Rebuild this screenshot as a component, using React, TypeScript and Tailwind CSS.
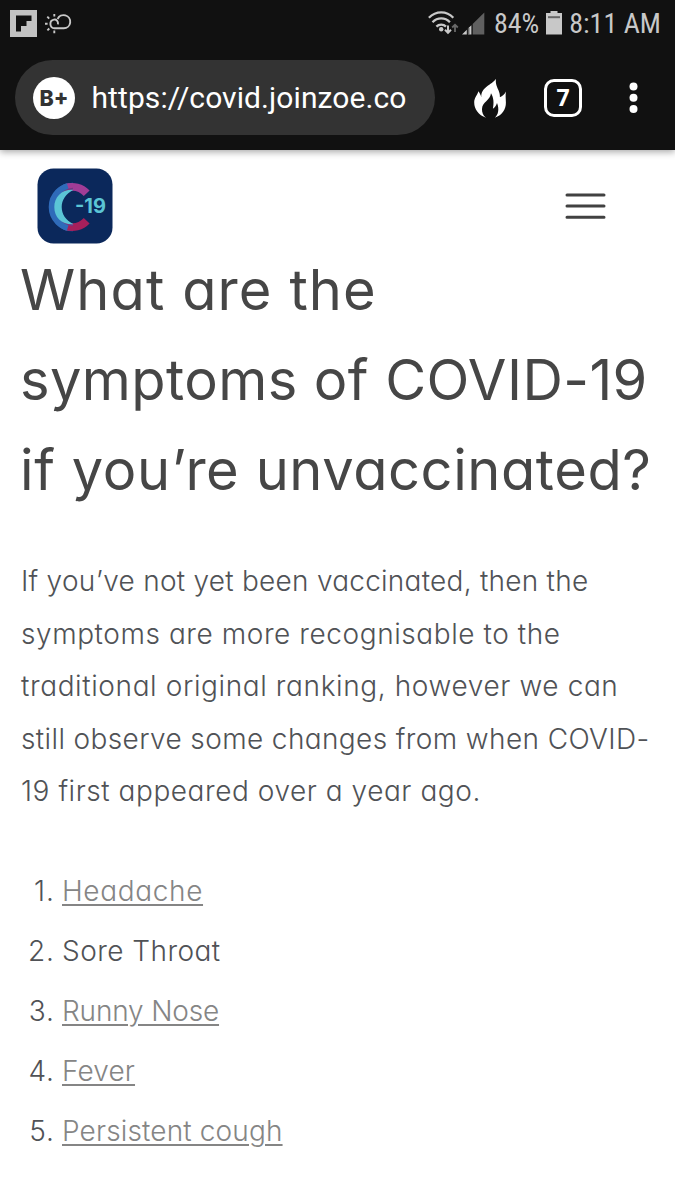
const sofia = "font-['Inter','Liberation_Sans',sans-serif] [font-feature-settings:'cv11']";

const heading = [
  { text: "What are the", spacing: "tracking-[1.1px]" },
  { text: "symptoms of COVID-19", spacing: "tracking-[0.42px]" },
  { text: "if you’re unvaccinated?", spacing: "tracking-[0.58px]" },
];

const paragraph = [
  { text: "If you’ve not yet been vaccinated, then the", spacing: "tracking-[0.25px]" },
  { text: "symptoms are more recognisable to the", spacing: "tracking-[0.57px]" },
  { text: "traditional original ranking, however we can", spacing: "tracking-[0.61px]" },
  { text: "still observe some changes from when COVID-", spacing: "tracking-[0.38px]" },
  { text: "19 first appeared over a year ago.", spacing: "tracking-[0.55px]" },
];

const symptoms = [
  { text: "Headache", link: true, spacing: "tracking-[0.64px]" },
  { text: "Sore Throat", link: false, spacing: "tracking-[0.45px]" },
  { text: "Runny Nose", link: true, spacing: "tracking-[-0.17px]" },
  { text: "Fever", link: true, spacing: "tracking-[0.13px]" },
  { text: "Persistent cough", link: true, spacing: "tracking-[0.14px]" },
];

function StatusBar() {
  return (
    <div className="flex h-[46px] items-center justify-between pl-[10px] pr-[14px] text-[#c8c8c8]">
      <div className="flex items-center gap-[8px]">
        <svg width="27" height="27" viewBox="0 0 27 27">
          <rect width="27" height="27" fill="#c2c2c2" />
          <path d="M6 5.5H21.5V11H16.5V16H11V21.5H6Z" fill="#111" />
        </svg>
        <svg width="27" height="21" viewBox="0 0 27 21" fill="none" stroke="#c8c8c8" strokeWidth="1.9">
          <path d="M13 11.4C13.4 8 11.3 6.1 8.900 6.600A4.400 4.400 0 0 0 9.500 15.300H18.800A6.600 6.600 0 1 0 12.600 6" />
          <path d="M9.300 1v2.600M2.300 3.700l1.900 1.900M0 10.700h2.600M2.400 17.400l1.900-1.900M9.300 17.600v2.600" />
        </svg>
      </div>
      <div className="flex items-center font-['Roboto',sans-serif] text-[28px] font-normal leading-[46px] [font-stretch:75%]">
        <svg width="31" height="24" viewBox="0 0 31 24" fill="none" stroke="#c8c8c8" strokeWidth="2.3">
          <path d="M.9 6.700C8-.4 18.500-.4 25.300 6.700M4.500 11.200c5-5 12.500-5 17.400 0M8.400 15.600c2.600-2.600 7-2.600 9.600 0" />
          <circle cx="13.200" cy="18.300" r="2.200" fill="#c8c8c8" stroke="none" />
          <path d="M20 14.500v7M17 18.800l3 3 3-3" strokeWidth="2" />
          <path d="M27 21v-7M24.200 16.500l2.800-2.800 2.800 2.800" stroke="#696969" strokeWidth="1.800" />
        </svg>
        <svg className="ml-[3px]" width="23" height="23" viewBox="0 0 23 23">
          <path d="M22.300.5V22.500H10.700V12Z" fill="#606060" />
          <path d="M0 22.500 4.800 17.700V22.500ZM5.900 22.500V16.600L9.400 13.200V22.500Z" fill="#c8c8c8" />
          <path d="M6.800 16v6.500" stroke="#111" strokeWidth=".8" />
        </svg>
        <span className="ml-[9px] pt-[2px]">84%</span>
        <svg className="ml-[7px]" width="16" height="24" viewBox="0 0 16 24">
          <path d="M4.500 0h7v2H16v21.500H0V2h4.500Z" fill="#c8c8c8" />
          <path d="M2 5.200h12v2H2Z" fill="#666" />
        </svg>
        <span className="ml-[7px] pt-[2px]">8:11 AM</span>
      </div>
    </div>
  );
}

function AddressBar() {
  return (
    <div className="flex h-[104px] items-center pb-px pl-[15px] pr-[34px]">
      <div className="flex h-[75px] w-[420px] items-center rounded-full bg-[#333] pl-[18px]">
        <div className="flex size-[42px] items-center justify-center rounded-full bg-white font-['Inter',sans-serif] font-extrabold leading-none">
          <svg width="32" height="24" viewBox="0 0 32 24" className="overflow-visible">
            <text x="1.500" y="20" fontSize="22" textLength="29" lengthAdjust="spacingAndGlyphs" fill="#333">B+</text>
          </svg>
        </div>
        <span className="ml-[16.500px] pt-px font-['Roboto',sans-serif] text-[30px] leading-none tracking-[0.08px] text-white">https://covid.joinzoe.co</span>
      </div>
      <svg className="ml-[39px]" width="33" height="40" viewBox="0 0 33 40" fill="#fff">
        <path d="M22 .8C21.200 6 23.200 9 24.600 12.500 25.500 15 26 16.500 25.900 19.300 28.500 18.300 30.500 16.500 32 13.600 31.300 17 31.800 20.500 31.900 24.500 32 31 28.500 37 20.800 39.800 24.300 36.500 25.500 31.500 23 25 22 27.800 20.800 29.500 18.900 30.800 20 25 19.800 20 17 15.300 16.200 22.500 8.200 24 8 31 7.900 34.500 9 37.500 12 39.800 4.500 37 .2 31 .2 24.500.2 20 3 17.500 4.500 13.300 5.800 15.500 6.800 17 7.300 19.200 7.200 8.500 17.500 7.500 22 .8Z" />
      </svg>
      <div className="ml-[37px] flex h-[38px] w-[38px] items-center justify-center rounded-[10px] border-[3.500px] border-white font-['Open_Sans',sans-serif] text-[23px] font-bold leading-none text-white">7</div>
      <svg className="ml-[47px]" width="9" height="32" viewBox="0 0 9 32" fill="#fff">
        <circle cx="4.500" cy="4.500" r="4" />
        <circle cx="4.500" cy="15.800" r="4" />
        <circle cx="4.500" cy="27.100" r="4" />
      </svg>
    </div>
  );
}

function SiteHeader() {
  return (
    <div className="flex h-[95px] items-start justify-between pl-[37px] pr-[68px] pt-[18px]">
      <svg width="76" height="76" viewBox="0 0 76 76">
        <rect x=".5" y=".5" width="75" height="75" rx="16" fill="#0b285b" />
        <g fill="none" strokeWidth="8">
          <path d="M36 18.700A20.300 20.300 0 0 0 36 59.300" stroke="#2f6bb9" />
          <path d="M29 19.800A20.300 20.300 0 0 1 49.700 25.300" stroke="#a03c96" />
          <path d="M29 58.200A20.300 20.300 0 0 0 49.700 52.700" stroke="#a61f5b" />
          <path d="M21 26A20.300 20.300 0 0 1 31 19.100M21 52A20.300 20.300 0 0 0 31 58.900" stroke="#2f6bb9" />
          <path d="M23.500 28A17.500 17.500 0 0 1 36 21M23.500 50A17.500 17.500 0 0 0 36 57" stroke="#753784" strokeWidth="2.500" />
        </g>
        <path d="M36.500 21.700C25 21 17.300 28.500 17.300 39S25 57 36.500 56.300C28.500 52 24.700 46 24.700 39S28.500 26 36.500 21.700Z" fill="#5bc5d6" />
        <text x="37.900" y="45.300" fontFamily="Inter" fontWeight="700" fontSize="19.500" textLength="31" lengthAdjust="spacingAndGlyphs" fill="#5bc5d6">-19</text>
      </svg>
      <svg className="mt-[23px]" width="42" height="30" viewBox="0 0 42 30" stroke="#414141" strokeWidth="3" strokeLinecap="round">
        <path d="M2 4h37M2 15h37M2 26.300h37" />
      </svg>
    </div>
  );
}

export default function App() {
  return (
    <div className="h-[1200px] w-[675px] overflow-hidden bg-white">
      <header className="h-[150px] bg-[#111] shadow-[0_2px_7px_rgba(0,0,0,0.35)]">
        <StatusBar />
        <AddressBar />
      </header>
      <SiteHeader />
      <main className={`pl-[20px] ${sofia}`}>
        <h1 className="text-[56px] font-[430] leading-[90px] text-[#464646]">
          {heading.map((line) => (
            <span key={line.text} className={`block whitespace-nowrap ${line.spacing}`}>{line.text}</span>
          ))}
        </h1>
        <p className="mt-[40px] pl-px text-[28px] font-light leading-[52.5px] text-[#505256]">
          {paragraph.map((line) => (
            <span key={line.text} className={`block whitespace-nowrap ${line.spacing}`}>{line.text}</span>
          ))}
        </p>
        <ol className="mt-[43px] text-[28px] font-light leading-[60px] text-[#505256]">
          {symptoms.map((item, index) => (
            <li key={item.text} className="flex whitespace-nowrap">
              <span className="w-[35px] text-right tracking-[1px]">{index + 1}.</span>
              {item.link ? (
                <a className={`ml-[7px] text-[#858585] underline decoration-2 underline-offset-[3px] ${item.spacing}`}>{item.text}</a>
              ) : (
                <span className={`ml-[7px] ${item.spacing}`}>{item.text}</span>
              )}
            </li>
          ))}
        </ol>
      </main>
    </div>
  );
}
